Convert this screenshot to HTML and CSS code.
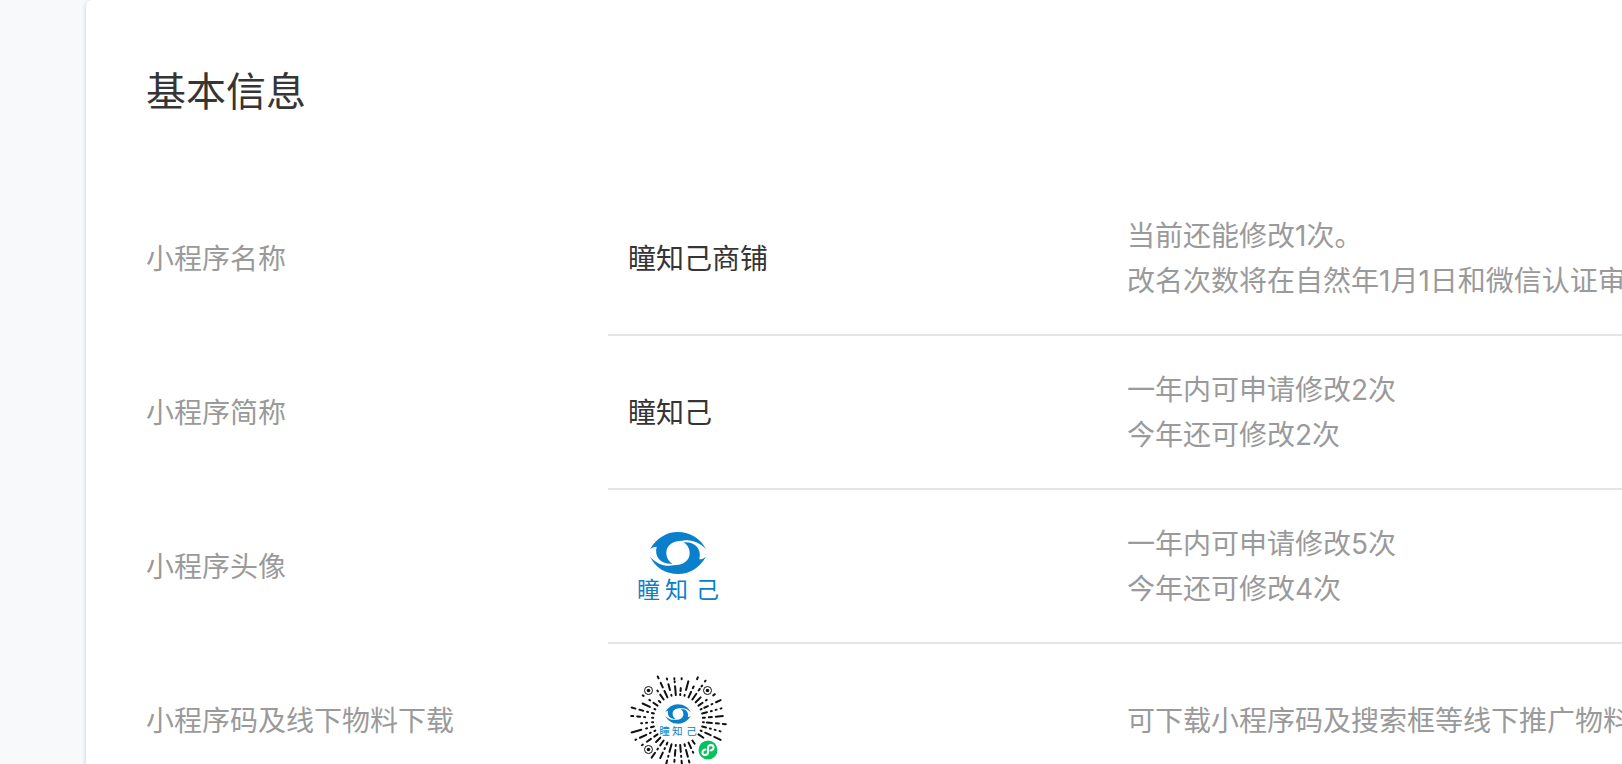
FILE: index.html
```
<!DOCTYPE html>
<html lang="zh-CN">
<head>
<meta charset="utf-8" />
<meta name="viewport" content="width=device-width,initial-scale=1.0"/>
<title>基本信息</title>
<link rel="stylesheet" href="styles.css">
</head>
<body>

<svg class="defs" aria-hidden="true">
<symbol id="logo" viewBox="0 0 100 100">
<g transform="translate(-8 -6) scale(0.3333)">
<path id="swirl" d="M90 118 C110 84 140 66 173 66 C212 66 242 86 258 118 C240 98 215 87 188 92 C158 92 139 106 139 128 C139 144 147 155 158 161 C124 164 102 142 110 110 C102 110 96 113 90 118 Z"/>
<use href="#swirl" transform="rotate(180 174 129)"/>
</g>
<text y="82"><tspan x="9">瞳</tspan><tspan x="37">知</tspan><tspan x="68">己</tspan></text>
</symbol>
</svg>

<div class="card">
<h2 class="title">基本信息</h2>

<table class="info">
<colgroup><col class="col-name"><col class="col-value"><col></colgroup>
<tr>
<th scope="row">小程序名称</th>
<td class="value">瞳知己商铺</td>
<td class="tips"><p>当前还能修改1次。</p><p>改名次数将在自然年1月1日和微信认证审</p></td>
</tr>
<tr>
<th scope="row">小程序简称</th>
<td class="value">瞳知己</td>
<td class="tips"><p>一年内可申请修改2次</p><p>今年还可修改2次</p></td>
</tr>
<tr>
<th scope="row">小程序头像</th>
<td class="value-pic"><svg class="pic logo" viewBox="0 0 100 100" role="img"><use href="#logo"/></svg></td>
<td class="tips"><p>一年内可申请修改5次</p><p>今年还可修改4次</p></td>
</tr>
<tr>
<th scope="row">小程序码及线下物料下载</th>
<td class="value-pic">
<svg class="pic" viewBox="0 0 100 100" role="img">
<g class="rays" id="rays"></g>
<g class="eyes">
<circle cx="20.500" cy="20.500" r="4"/><circle cx="79.500" cy="20.500" r="4"/><circle cx="20.500" cy="79.500" r="4"/>
</g>
<g class="dots">
<circle cx="20.500" cy="20.500" r="1.800"/><circle cx="79.500" cy="20.500" r="1.800"/><circle cx="20.500" cy="79.500" r="1.800"/>
</g>
<svg class="logo" x="27" y="27" width="46" height="46"><use href="#logo"/></svg>
<circle class="badge" cx="80" cy="80" r="9.500"/>
<path class="badge-mark" d="M77.500 79.500 C73.500 80 73.500 85 77 85 C79 85 80 83.500 80 82 V78 C80 76.500 81 75 83 75 C86.500 75 86.500 80 82.500 80.500"/>
</svg>
</td>
<td class="tips"><p>可下载小程序码及搜索框等线下推广物料</p></td>
</tr>
</table>
</div>

<script>
'use strict';

// one entry per ray, clockwise from the top: [from, to] radius of each dash
const rays = [
   [[25,26],[29,32],[41,42]],
   [[25,26],[31,40]],
   [[25,31],[35,37],[45,47]],
   [[25,32],[36,38],[41,42],[47,48]],
   [[25,32]],
   [[25,30],[34,35],[43,45]],
   [[25,26],[29,33],[37,38],[42,47]],
   [[25,30],[34,35],[39,40],[44,45]],
   [[25,27],[31,34],[38,45]],
   [[25,26],[29,34],[38,41],[45,48]],
   [[25,29],[33,34],[38,39],[43,44]],
   [[25,26],[30,36],[40,47]],
   [[25,31]],
   [],
   [[25,29]],
   [[25,31],[35,36]],
   [[25,27],[31,38],[42,44]],
   [[25,32],[36,37],[41,45]],
   [[25,26],[30,36],[40,42]],
   [[25,33],[37,38],[42,46]],
   [[25,27],[31,32],[36,42]],
   [[25,31],[35,36],[40,46]],
   [[25,31]],
   [[25,29],[33,38],[43,44]],
   [[25,26],[30,31],[35,42],[46,47]],
   [[25,28],[32,33],[38,48]],
   [[25,26],[31,32],[36,37]],
   [[25,26],[33,34],[38,41],[45,47]],
   [[25,27],[31,32],[36,40],[44,48]],
   [[25,26],[31,39]],
   [[25,30],[34,35],[42,43]],
   [[25,27]],
   [[25,31],[35,36]],
   [[25,32],[36,41],[46,48]],
   [[25,26],[31,37],[42,43]],
   [[25,34],[38,39],[41,42]]
];

let lines = "";
for(let m=0;m<rays.length;m++){
   for(let n=0;n<rays[m].length;n++){
      lines = lines + `<line x1="50" x2="50" y1="${50-rays[m][n][0]}" y2="${50-rays[m][n][1]}" transform="rotate(${m*10+5} 50 50)"/>`;
   }
}
document.getElementById("rays").innerHTML = lines;
</script>
</body>
</html>
```
FILE: styles.css
```
body {
     margin:0;
     padding-left:86px;
     font-family:Inter, "Noto Sans CJK SC", sans-serif;
     font-size:28px;
     line-height:45px;
     color:#353535;
     background:#f8f9fb;
     overflow:hidden;
}
.defs {
     display:none;
}
.card {
     padding:62px 0 0 60px;
     background:#ffffff;
     border-radius:6px 0 0 0;
     box-shadow:0 1px 4px rgba(0,0,0,0.2);
}
.title {
     margin:0 0 60px;
     font-size:40px;
     font-weight:400;
     line-height:60px;
}

.info {
     width:100%;
     table-layout:fixed;
     border-spacing:0;
}
.col-name {
     width:462px;
}
.col-value {
     width:519px;
}
.info th,
.info td {
     height:90px;
     padding:32px 0 30px;
     white-space:nowrap;
     vertical-align:middle;
     border-bottom:2px solid transparent;
}
.info th {
     font-weight:400;
     text-align:left;
     color:#9a9a9a;
}
.info td {
     border-bottom-color:#e4e4eb;
}
.info .value {
     padding-left:20px;
}
.info .value-pic {
     padding:0 0 0 20px;
}
.info .tips {
     color:#9a9a9a;
}
.tips p {
     margin:0;
}

.pic {
     display:block;
     width:100px;
     height:100px;
}
.logo {
     fill:#0a80cc;
     font-family:"Noto Sans CJK SC", sans-serif;
     font-size:23px;
}
.rays {
     stroke:#111111;
     stroke-width:2;
     stroke-linecap:round;
}
.eyes {
     fill:#ffffff;
     stroke:#111111;
     stroke-width:1;
}
.dots {
     fill:#111111;
}
.badge {
     fill:#07c160;
}
.badge-mark {
     fill:none;
     stroke:#ffffff;
     stroke-width:2;
     stroke-linecap:round;
}
```
